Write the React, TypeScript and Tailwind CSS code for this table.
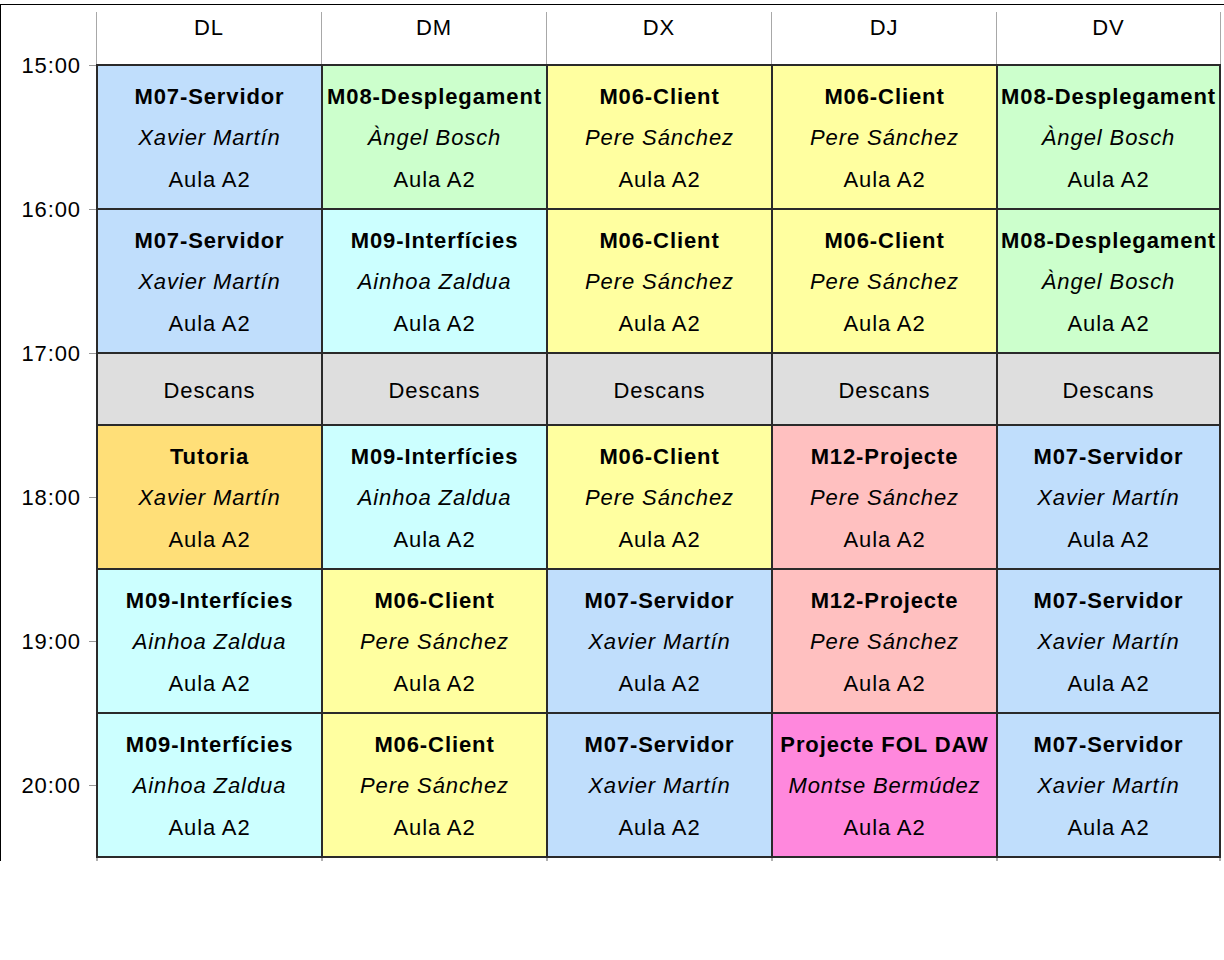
import React from "react";

type Cell = { t: string; p?: string; bg: string; brk?: boolean };

const BLUE = "bg-[#c0defc]";
const GREEN = "bg-[#ccffcc]";
const YELLOW = "bg-[#ffffa0]";
const CYAN = "bg-[#ccffff]";
const GOLD = "bg-[#ffdf78]";
const PINK = "bg-[#ffc0c0]";
const MAG = "bg-[#ff88dd]";
const GRAY = "bg-[#dedede]";

const m07: Cell = { t: "M07-Servidor", p: "Xavier Martín", bg: BLUE };
const m08: Cell = { t: "M08-Desplegament", p: "Àngel Bosch", bg: GREEN };
const m06: Cell = { t: "M06-Client", p: "Pere Sánchez", bg: YELLOW };
const m09: Cell = { t: "M09-Interfícies", p: "Ainhoa Zaldua", bg: CYAN };
const m12: Cell = { t: "M12-Projecte", p: "Pere Sánchez", bg: PINK };
const tut: Cell = { t: "Tutoria", p: "Xavier Martín", bg: GOLD };
const fol: Cell = { t: "Projecte FOL DAW", p: "Montse Bermúdez", bg: MAG };
const des: Cell = { t: "Descans", bg: GRAY, brk: true };

const days: { name: string; cells: Cell[] }[] = [
  { name: "DL", cells: [m07, m07, des, tut, m09, m09] },
  { name: "DM", cells: [m08, m09, des, m09, m06, m06] },
  { name: "DX", cells: [m06, m06, des, m06, m07, m07] },
  { name: "DJ", cells: [m06, m06, des, m12, m12, fol] },
  { name: "DV", cells: [m08, m08, des, m07, m07, m07] },
];

const hours = ["15:00", "16:00", "17:00", "18:00", "19:00", "20:00"];

function CellBox({ c }: { c: Cell }) {
  if (c.brk) {
    return (
      <div className={`h-[72px] border-b-2 border-[#2a2a2a] ${c.bg} flex items-center justify-center pt-[2px]`}>
        <span>{c.t}</span>
      </div>
    );
  }
  return (
    <div
      className={`h-[144px] border-b-2 border-[#2a2a2a] ${c.bg} flex flex-col items-center justify-center pt-[2px] leading-[41.5px] whitespace-nowrap`}
    >
      <span className="font-bold">{c.t}</span>
      <span className="italic">{c.p}</span>
      <span>Aula A2</span>
    </div>
  );
}

export default function App() {
  return (
    <div className="w-[1224px] h-[960px] bg-white pt-1 overflow-hidden font-['Liberation_Sans',Arial,sans-serif] text-[22px] tracking-[0.9px] text-black">
      <div className="flex border-l border-t border-black pt-[7px] w-[1224px]">
        {/* time axis */}
        <div className="w-[95px] h-[846px] overflow-hidden flex flex-col shrink-0">
          <div className="h-[41px] shrink-0" />
          {hours.map((h) => (
            <div key={h} className="h-[144px] shrink-0 flex items-start justify-end">
              <div className="h-[24px] flex items-center">
                <span className="leading-[24px] mr-[8px] pt-[2px]">{h}</span>
                <div className="w-[7px] h-px bg-[#999]" />
              </div>
            </div>
          ))}
        </div>
        {/* days */}
        <div className="flex flex-col">
          <div className="flex">
            {days.map((d, i) => (
              <div
                key={d.name}
                className={`w-[225px] h-[52px] border-l border-[#a8a8a8] ${i === 4 ? "border-r" : ""} flex justify-center pt-[4px] leading-[24px]`}
              >
                {d.name}
              </div>
            ))}
          </div>
          <div className="flex border-t-2 border-[#2a2a2a]">
            {days.map((d, i) => (
              <div
                key={d.name}
                className={`w-[225px] flex flex-col border-l-2 border-[#2a2a2a] ${i === 4 ? "border-r-2" : ""}`}
              >
                {d.cells.map((c, j) => (
                  <CellBox key={j} c={c} />
                ))}
              </div>
            ))}
          </div>
          <div className="flex h-[3px]">
            {days.map((d, i) => (
              <div
                key={d.name}
                className={`w-[225px] border-l-2 border-[#b0b0b0] ${i === 4 ? "border-r-2" : ""}`}
              />
            ))}
          </div>
        </div>
      </div>
    </div>
  );
}
